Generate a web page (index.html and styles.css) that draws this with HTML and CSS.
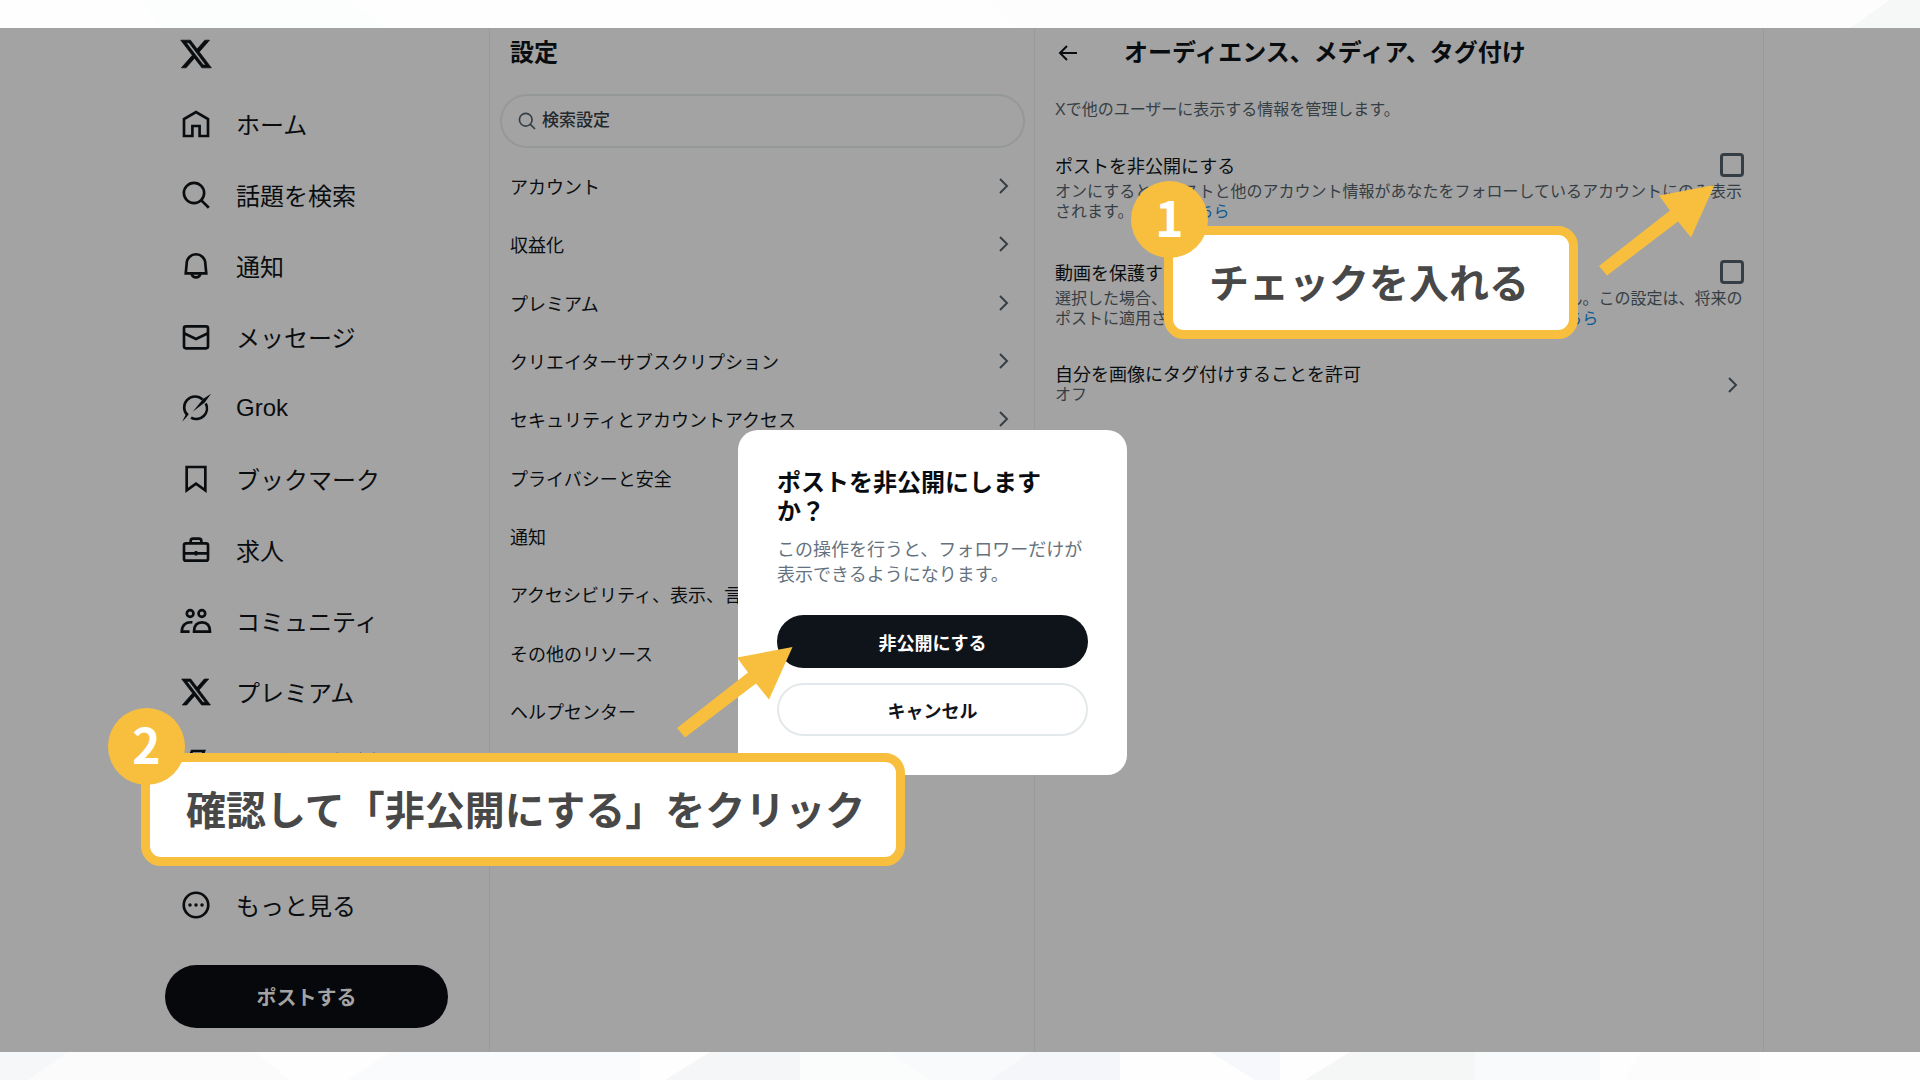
FILE: index.html
```html
<!DOCTYPE html>
<html lang="ja">
<head>
<meta charset="utf-8">
<meta name="viewport" content="width=device-width, initial-scale=1">
<title>オーディエンス、メディア、タグ付け</title>
<link rel="stylesheet" href="styles.css">
</head>
<body>
<svg class="defs" width="0" height="0" aria-hidden="true">
  <symbol id="x-logo" viewBox="0 0 24 24"><path fill="currentColor" stroke="currentColor" stroke-width=".5" d="M18.244 2.25h3.308l-7.227 8.26 8.502 11.24H16.17l-5.214-6.817L4.99 21.75H1.68l7.73-8.835L1.254 2.25H8.08l4.713 6.231zm-1.161 17.52h1.833L7.084 4.126H5.117z"/></symbol>
  <symbol id="search" viewBox="0 0 24 24"><circle cx="10.500" cy="10.500" r="7.600"/><path d="M16 16l5.600 5.600"/></symbol>
  <symbol id="chevron" viewBox="0 0 12 18"><path d="M2 2l7 7-7 7"/></symbol>
  <symbol id="arrow" viewBox="0 0 116 91"><path d="M115.500 0 60 10.500 71 25.500 0 81 8 90.500 79 36.500 92 52.500z"/></symbol>
</svg>

<svg class="strip" viewBox="0 0 1920 28" preserveAspectRatio="none" aria-hidden="true">
  <path fill="#fcfdfd" d="M140 0H345L388 28H160z"/>
  <path fill="#fdfdfd" d="M985 0H1890L1850 28H1018z"/>
  <path fill="#f6f7f7" d="M1890 0H1920V28H1850z"/>
</svg>

<main class="app">
  <nav class="nav" aria-label="メイン">
    <a class="logo" href="#" aria-label="X"><svg class="logo-icon"><use href="#x-logo"/></svg></a>
    <ul class="nav-list">
      <li><a href="#"><svg class="icon" viewBox="0 0 24 24"><path d="M3 21V8.300L12 3l9 5.300V21h-6.300v-7.500H9.300V21z"/></svg>ホーム</a></li>
      <li><a href="#"><svg class="icon"><use href="#search"/></svg>話題を検索</a></li>
      <li><a href="#"><svg class="icon" viewBox="0 0 24 24"><path d="M4.300 17.500 5 10.200a7 7 0 0 1 14 0l.7 7.300zM8.700 18a3.400 3.400 0 0 0 6.600 0"/></svg>通知</a></li>
      <li><a href="#"><svg class="icon" viewBox="0 0 24 24"><rect x="3" y="4" width="18" height="16.500" rx="1.500"/><path d="M3 9.200l9 4.300 9-4.300"/></svg>メッセージ</a></li>
      <li><a href="#"><svg class="icon" viewBox="0 0 24 24"><path d="M5.700 17.500A8 8 0 0 1 17 5.600M19.300 8.500A8 8 0 0 1 8.300 19.200"/><path class="solid" d="M9.500 14.800 17.500 5 23.300 1.300 18.600 7.900zM6.500 16.500 4.800 19 1.600 22.300 5 15.500z"/></svg>Grok</a></li>
      <li><a href="#"><svg class="icon" viewBox="0 0 24 24"><path d="M5 3h14v17.500l-7-5-7 5z"/></svg>ブックマーク</a></li>
      <li><a href="#"><svg class="icon" viewBox="0 0 24 24"><rect x="3" y="7" width="18" height="13" rx="1.500"/><path d="M8 7V5.300q0-1.800 1.800-1.800h4.400q1.800 0 1.800 1.800V7M3 14.500h18M12 12.700v3.500"/></svg>求人</a></li>
      <li><a href="#"><svg class="icon" viewBox="0 0 24 24"><circle cx="7.600" cy="6.400" r="2.500"/><circle cx="16.400" cy="6.400" r="2.500"/><path d="M10.500 20c0-4.600 2.200-7 6-7s6 2.400 6 7zM9.300 13C4.300 12.400 1.500 15 1.300 20h5.900"/></svg>コミュニティ</a></li>
      <li><a href="#"><svg class="icon"><use href="#x-logo"/></svg>プレミアム</a></li>
      <li><a href="#"><svg class="icon" viewBox="0 0 24 24"><path d="M9 3h9l-2.500 6H20L8 21.500l2.500-8.500H5z"/></svg>認証済み組織</a></li>
      <li><a href="#"><svg class="icon" viewBox="0 0 24 24"><circle cx="12" cy="8" r="4"/><path d="M4 21c.6-5 3.500-7 8-7s7.400 2 8 7z"/></svg>プロフィール</a></li>
      <li><a href="#"><svg class="icon" viewBox="0 0 24 24"><circle cx="12" cy="12" r="9.200"/><g class="solid"><circle cx="7.500" cy="12" r="1.300"/><circle cx="12" cy="12" r="1.300"/><circle cx="16.500" cy="12" r="1.300"/></g></svg>もっと見る</a></li>
    </ul>
    <button class="post" type="button">ポストする</button>
  </nav>

  <section class="settings">
    <h1 class="heading">設定</h1>
    <label class="search"><svg class="search-icon"><use href="#search"/></svg><input type="search" placeholder="検索設定" aria-label="検索設定"></label>
    <ul class="menu">
      <li><a href="#">アカウント<svg class="chevron"><use href="#chevron"/></svg></a></li>
      <li><a href="#">収益化<svg class="chevron"><use href="#chevron"/></svg></a></li>
      <li><a href="#">プレミアム<svg class="chevron"><use href="#chevron"/></svg></a></li>
      <li><a href="#">クリエイターサブスクリプション<svg class="chevron"><use href="#chevron"/></svg></a></li>
      <li><a href="#">セキュリティとアカウントアクセス<svg class="chevron"><use href="#chevron"/></svg></a></li>
      <li><a href="#">プライバシーと安全<svg class="chevron"><use href="#chevron"/></svg></a></li>
      <li><a href="#">通知<svg class="chevron"><use href="#chevron"/></svg></a></li>
      <li><a href="#">アクセシビリティ、表示、言語<svg class="chevron"><use href="#chevron"/></svg></a></li>
      <li><a href="#">その他のリソース<svg class="chevron"><use href="#chevron"/></svg></a></li>
      <li><a href="#">ヘルプセンター<svg class="chevron"><use href="#chevron"/></svg></a></li>
    </ul>
  </section>

  <section class="detail">
    <header class="detail-head">
      <a class="back" href="#" aria-label="戻る"><svg viewBox="0 0 20 20"><path d="M9 3l-7 7 7 7M2 10h17"/></svg></a>
      <h2 class="heading">オーディエンス、メディア、タグ付け</h2>
    </header>
    <p class="intro note">Xで他のユーザーに表示する情報を管理します。</p>
    <div class="option">
      <div class="option-row"><label for="protect-posts">ポストを非公開にする</label><input type="checkbox" id="protect-posts"></div>
      <p class="note">オンにすると、ポストと他のアカウント情報があなたをフォローしているアカウントにのみ表示<br>されます。<a href="#">詳細はこちら</a></p>
    </div>
    <div class="option">
      <div class="option-row"><label for="protect-videos">動画を保護する</label><input type="checkbox" id="protect-videos"></div>
      <p class="note">選択した場合、ポスト内の動画はデフォルトではダウンロードできません。この設定は、将来の<br>ポストに適用されますが、過去のポストには適用されません。<a href="#">詳細はこちら</a></p>
    </div>
    <a class="tagging" href="#">
      <span class="tagging-text"><span class="tagging-title">自分を画像にタグ付けすることを許可</span><span class="note">オフ</span></span>
      <svg class="chevron"><use href="#chevron"/></svg>
    </a>
  </section>

  <div class="dialog" role="dialog" aria-labelledby="dialog-title">
    <h2 id="dialog-title">ポストを非公開にします<br>か？</h2>
    <p>この操作を行うと、フォロワーだけが<br>表示できるようになります。</p>
    <button class="confirm" type="button">非公開にする</button>
    <button class="cancel" type="button">キャンセル</button>
  </div>

  <svg class="arrow arrow-check"><use href="#arrow"/></svg>
  <svg class="arrow arrow-confirm"><use href="#arrow"/></svg>
  <div class="callout callout-check"><span class="badge">1</span>チェックを入れる</div>
  <div class="callout callout-confirm"><span class="badge">2</span>確認して「非公開にする」をクリック</div>
</main>

<svg class="strip" viewBox="0 0 1920 28" preserveAspectRatio="none" aria-hidden="true">
  <path fill="#fbfbfc" d="M0 0H255L290 28H0z"/>
  <path fill="#f5f7f9" d="M0 0H68L28 28H0z"/>
  <path fill="#f9fbfd" d="M390 0H640V28H348z"/>
  <path fill="#f5f6f8" d="M710 0H800V28H665z"/>
  <path fill="#fbfcfc" d="M800 0H890L930 28H800z"/>
  <path fill="#f9fafc" d="M890 0H1030L990 28H930z"/>
  <path fill="#f5f6f9" d="M1030 0H1120V28H990z"/>
  <path fill="#f7f8fb" d="M1210 0H1280V28H1255z"/>
  <path fill="#f5f6f6" d="M1350 0H1475V28H1305z"/>
  <path fill="#f9fafc" d="M1475 0H1600V28H1475z"/>
  <path fill="#fcfcfc" d="M1640 0H1760V28H1625z"/>
</svg>
</body>
</html>
```

FILE: styles.css
```css
:root {
  --dim: #a3a3a3;
  --ink: #0a0d10;
  --muted: #363e45;
  --line: #989b9d;
  --accent: #f8bf3f;
}

* { box-sizing: border-box; }

body {
  margin: 0;
  min-height: 100vh;
  display: flex;
  flex-direction: column;
  background: #fefefe;
  color: var(--ink);
  font-family: "Liberation Sans", "Noto Sans CJK JP", sans-serif;
  font-size: 18px;
}

h1, h2, p, ul { margin: 0; padding: 0; font-weight: 400; }
ul { list-style: none; }
a { color: inherit; text-decoration: none; }
button, input { font: inherit; }
svg { fill: none; stroke: currentColor; stroke-width: 2; flex: none; display: block; }
svg.defs { position: absolute; }
.solid { fill: currentColor; stroke: none; }

.strip { width: 100%; height: 28px; stroke: none; }

.app {
  position: relative;
  flex: 1;
  display: grid;
  grid-template-columns: 490fr 545fr 729fr 156fr;
  background: var(--dim);
}

/* Main navigation */
.nav { padding-left: 165px; border-right: 1px solid var(--line); }
.logo { display: flex; align-items: center; height: 52px; padding-left: 14px; }
.logo-icon { width: 34px; height: 34px; }
.nav-list { padding: 8px 0 0 15px; }
.nav-list a { display: flex; align-items: center; gap: 24px; height: 71px; font-size: 24px; }
.icon { width: 32px; height: 32px; }
.post {
  display: block;
  width: 283px;
  height: 63px;
  margin-top: 25px;
  border: 0;
  border-radius: 32px;
  background: #06080c;
  color: var(--dim);
  font-size: 20px;
  font-weight: 700;
}

/* Settings menu */
.settings { border-right: 1px solid var(--line); }
.heading { font-size: 24px; font-weight: 700; line-height: 50px; }
.settings .heading { padding-left: 20px; }
.search {
  display: flex;
  align-items: center;
  gap: 5px;
  height: 54px;
  margin: 16px 9px 9px 10px;
  padding: 0 15px;
  border: 2px solid #959899;
  border-radius: 27px;
  color: var(--muted);
}
.search-icon { width: 20px; height: 20px; }
.search input { flex: 1; min-width: 0; padding: 0; border: 0; outline: 0; background: none; font-size: 17px; font-weight: 500; }
.search input::placeholder { color: #22282d; opacity: 1; }
.menu { display: grid; grid-auto-rows: 1fr; min-height: 583px; padding: 0 24px 0 20px; }
.menu a { display: flex; align-items: center; justify-content: space-between; height: 100%; }
.chevron { width: 12px; height: 18px; color: var(--muted); }

/* Detail pane */
.detail { border-right: 1px solid var(--line); padding: 0 19px 0 20px; }
.detail-head { display: flex; align-items: center; gap: 46px; padding-left: 3px; }
.back svg { width: 20px; height: 20px; }
.note { font-size: 16px; line-height: 20px; color: var(--muted); white-space: nowrap; }
.note a { color: #0f5a92; }
.intro { margin: 22px 0 31px; }
.option { margin-bottom: 36px; }
.option-row { display: flex; align-items: center; justify-content: space-between; height: 28px; margin-bottom: 3px; }
.option-row input {
  appearance: none;
  width: 24px;
  height: 24px;
  margin: 0;
  border: 3px solid var(--muted);
  border-radius: 4px;
}
.tagging { display: flex; align-items: center; justify-content: space-between; padding-right: 5px; }
.tagging-text { display: grid; }
.tagging-title { line-height: 20px; }

/* Confirmation dialog */
.dialog {
  position: absolute;
  left: 738px;
  top: 402px;
  width: 389px;
  padding: 38px 39px 39px;
  border-radius: 20px;
  background: #fff;
}
.dialog h2 { font-size: 24px; font-weight: 700; line-height: 29px; }
.dialog p { margin: 12px 0 27px; line-height: 25px; color: #65727e; }
.dialog button { display: block; width: 100%; height: 53px; border-radius: 27px; font-weight: 700; }
.dialog .confirm { margin-bottom: 15px; border: 0; background: #0f141a; color: #fff; }
.dialog .cancel { border: 2px solid #e3e8eb; background: #fff; color: #0f141a; }

/* Step callouts */
.arrow { position: absolute; width: 116px; height: 91px; fill: var(--accent); stroke: none; }
.arrow-check { left: 1599px; top: 157px; }
.arrow-confirm { left: 677px; top: 619px; }
.callout {
  position: absolute;
  padding: 0 31px 3px 36px;
  border: 9px solid var(--accent);
  border-radius: 20px;
  background: #fff;
  color: #484848;
  font-family: "Noto Sans CJK JP", sans-serif;
  font-size: 40px;
  font-weight: 700;
  line-height: 92px;
  white-space: nowrap;
}
.callout-check { left: 1164px; top: 198px; min-width: 414px; }
.callout-confirm { left: 141px; top: 725px; }
.badge {
  position: absolute;
  left: -42px;
  top: -54px;
  width: 77px;
  height: 77px;
  border-radius: 50%;
  background: var(--accent);
  color: #fff;
  font-size: 48px;
  line-height: 70px;
  text-align: center;
}
```
